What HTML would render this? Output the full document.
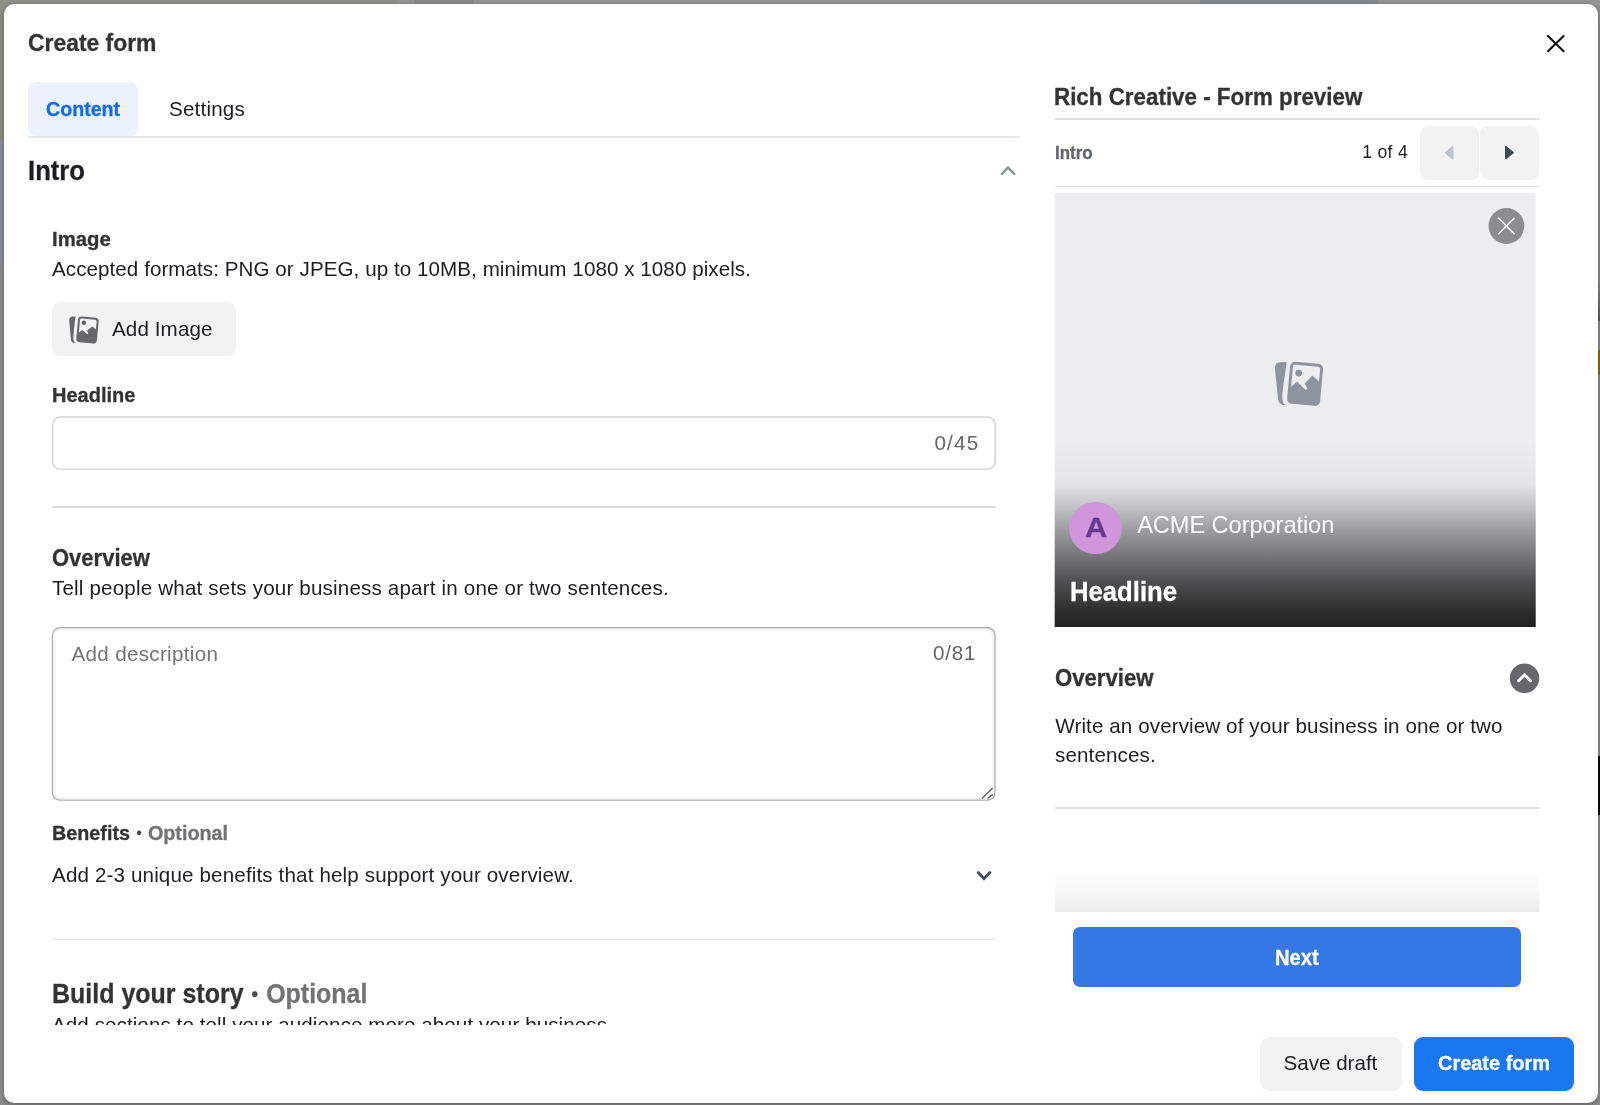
<!DOCTYPE html>
<html lang="en">
<head>
<meta charset="utf-8">
<title>Create form</title>
<style>
*{box-sizing:border-box;margin:0;padding:0}
html,body{width:1600px;height:1105px;overflow:hidden}
body{position:relative;background:#8f8f8f;font-family:"Liberation Sans",sans-serif;color:#1c1e21}
.abs,.t,.bg{position:absolute}
.t{white-space:nowrap;line-height:1;transform-origin:0 0}
.b{font-weight:bold;-webkit-text-stroke:.3px}
.dk{color:#333}
.gr{color:#666}
.opt{color:#717273}
.dot{color:#4a4b4d;font-size:.74em;position:relative;top:-.123em;padding:0 .0615em}
.wh{color:#fff}
.hr{position:absolute;background:#dfdfe1;height:1.5px}
#modal{position:absolute;left:4px;top:4px;width:1593.5px;height:1098.5px;background:#fff;border-radius:10px;box-shadow:0 2px 6px rgba(0,0,0,.35)}
#page{position:absolute;left:0;top:0;width:1600px;height:1105px;will-change:transform}
.btn{position:absolute;border-radius:8px;background:#f2f2f2}
.field{position:absolute;background:#fff;border-radius:8px}
svg{position:absolute;overflow:visible}
</style>
</head>
<body>
<!-- page behind the dialog overlay -->
<div class="bg" style="left:0;top:0;width:397px;height:140px;background:#8e9188"></div>
<div class="bg" style="left:0;top:140px;width:6px;height:126px;background:#8d919a"></div>
<div class="bg" style="left:397px;top:0;width:803px;height:6px;background:#959595"></div>
<div class="bg" style="left:415px;top:0;width:58px;height:6px;background:#8b8b8b"></div>
<div class="bg" style="left:1200px;top:0;width:178px;height:6px;background:#848c97"></div>
<div class="bg" style="left:1378px;top:0;width:222px;height:6px;background:#959595"></div>
<div class="bg" style="left:1596px;top:280px;width:4px;height:41px;background:linear-gradient(#8f8f8f,#5e5e5e)"></div>
<div class="bg" style="left:1596px;top:349.8px;width:4px;height:25.2px;background:#996a00"></div>
<div class="bg" style="left:1596px;top:755.8px;width:4px;height:59.7px;background:#060606"></div>

<div id="modal"></div>

<div id="page">
<!-- header -->
<div class="t b dk" style="left:27.7px;top:32px;font-size:23.6px;transform:scaleX(0.9700)">Create form</div>
<svg style="left:1545px;top:33px" width="22" height="22" viewBox="0 0 22 22"><path d="M3 2.9 L18.6 18.2 M18.6 2.9 L3 18.2" stroke="#111" stroke-width="2.1" stroke-linecap="round" fill="none"/></svg>

<!-- tabs -->
<div class="abs" style="left:28px;top:82px;width:110px;height:53.5px;border-radius:8px;background:#ebf2fe"></div>
<div class="t b" style="left:45.8px;top:99px;font-size:20.6px;transform:scaleX(0.9529);color:#0f6bf2">Content</div>
<div class="t" style="left:169.0px;top:99px;font-size:20.6px;letter-spacing:0.198px">Settings</div>
<div class="hr" style="left:28px;top:136px;width:992px;height:2px;background:#e3e5e9"></div>

<!-- left column : Intro section -->
<div class="t b" style="left:27.6px;top:157px;font-size:27.2px;transform:scaleX(0.9440)">Intro</div>
<svg style="left:998px;top:162px" width="20" height="16" viewBox="0 0 20 16"><path d="M3.8 12 L10 5.6 L16.3 12" stroke="#8d949e" stroke-width="2.45" stroke-linecap="round" stroke-linejoin="miter" fill="none"/></svg>

<div class="t b dk" style="left:51.8px;top:229px;font-size:20.6px;transform:scaleX(0.9868)">Image</div>
<div class="t" style="left:52.0px;top:259px;font-size:20.6px;letter-spacing:0.060px">Accepted formats: PNG or JPEG, up to 10MB, minimum 1080 x 1080 pixels.</div>

<div class="btn" style="left:52px;top:302px;width:184.2px;height:54px"></div>
<svg style="left:69.4px;top:315.5px" width="30" height="28" viewBox="0 0 30 28">
  <g fill="#65676b">
    <path d="M0.2 4.2 C0.2 2 1.6 0.5 3.6 0.5 L6.6 0.5 C5.5 8 4.4 18 4.4 22.6 C4.4 24.5 5 26 6.2 27 L4.6 27 C3 26.5 2.1 25 1.9 23.4 Z"/>
    <g transform="translate(18.45 14) rotate(5.3)">
      <rect x="-9.35" y="-11.85" width="18.7" height="23.7" rx="2.6" ry="2.6" fill="none" stroke="#65676b" stroke-width="2"/>
      <circle cx="-4.2" cy="-6.9" r="2.3"/>
      <path d="M-9.3 4 L-5 0.5 L0.2 4.3 L1.3 3.5 L-0.2 0.6 L4.4 -4 L9.3 -0.9 L9.3 9.6 Q9.3 11.8 7.1 11.8 L-7.1 11.8 Q-9.3 11.8 -9.3 9.6 Z"/>
    </g>
  </g>
</svg>
<div class="t" style="left:112.0px;top:319px;font-size:20.6px;letter-spacing:0.107px">Add Image</div>

<div class="t b dk" style="left:51.5px;top:385px;font-size:20.6px;transform:scaleX(0.9718)">Headline</div>
<svg style="left:52px;top:416px" width="944" height="54" viewBox="0 0 944 54"><rect x="0.72" y="0.92" width="942.4" height="52.2" rx="7.6" ry="7.6" fill="#fff" stroke="#d2d3d5" stroke-width="1.45"/></svg>
<div class="t gr" style="left:934.4px;top:433px;font-size:20.6px;letter-spacing:1.224px">0/45</div>

<div class="hr" style="left:52px;top:506px;width:944px"></div>

<div class="t b dk" style="left:51.8px;top:547px;font-size:23.6px;transform:scaleX(0.9330)">Overview</div>
<div class="t" style="left:52.0px;top:578px;font-size:20.6px;letter-spacing:0.171px">Tell people what sets your business apart in one or two sentences.</div>
<svg style="left:51px;top:626px" width="946" height="176" viewBox="0 0 946 176"><rect x="1.5" y="1.7" width="942.4" height="172.4" rx="7.5" ry="7.5" fill="#fff" stroke="#adadaf" stroke-width="1.45"/><rect x="3.3" y="3.5" width="938.8" height="168.8" rx="6" ry="6" fill="none" stroke="#f4f4f4" stroke-width="2.2"/></svg>
<div class="t" style="left:71.5px;top:644px;font-size:20.6px;letter-spacing:0.321px;color:#737475">Add description</div>
<div class="t gr" style="left:933.0px;top:643px;font-size:20.6px;letter-spacing:0.791px">0/81</div>
<svg style="left:980px;top:785.5px" width="14" height="14" viewBox="0 0 14 14"><path d="M2 12.4 L12.6 2.3 M7.5 12.4 L12.6 8.6" stroke="#505050" stroke-width="1.3" fill="none"/></svg>

<div class="t b dk" style="left:51.6px;top:823px;font-size:20.6px;transform:scaleX(0.9599)">Benefits <span class="dot">•</span><span class="opt"> Optional</span></div>
<div class="t" style="left:52.0px;top:865px;font-size:20.6px;letter-spacing:0.140px">Add 2-3 unique benefits that help support your overview.</div>
<svg style="left:974px;top:868px" width="20" height="16" viewBox="0 0 20 16"><path d="M4.2 4.6 L10 10.6 L15.9 4.6" stroke="#4a505c" stroke-width="2.9" stroke-linecap="round" stroke-linejoin="miter" fill="none"/></svg>

<div class="hr" style="left:52px;top:938.7px;width:944px"></div>

<div class="t b dk" style="left:52.1px;top:980px;font-size:27.2px;transform:scaleX(0.9188)">Build your story <span class="dot">•</span><span class="opt"> Optional</span></div>
<div class="abs" style="left:0;top:1010px;width:1020px;height:15px;overflow:hidden"><div class="abs" style="left:0;top:-1010px"><div class="t" style="left:52.0px;top:1015px;font-size:20.6px;letter-spacing:0.074px">Add sections to tell your audience more about your business.</div></div></div>

<!-- right column : preview -->
<div class="t b dk" style="left:1054.2px;top:86px;font-size:23.6px;transform:scaleX(0.9482)">Rich Creative - Form preview</div>
<div class="hr" style="left:1054.6px;top:118.2px;width:484.8px"></div>
<div class="t b" style="left:1054.6px;top:145px;font-size:17.6px;transform:scaleX(0.9624);color:#606770">Intro</div>
<div class="t" style="left:1362.2px;top:144px;font-size:17.6px;letter-spacing:0.293px">1 of 4</div>
<div class="abs" style="left:1419.6px;top:126.2px;width:59.8px;height:54px;border-radius:8px;background:#f2f2f2"></div>
<div class="abs" style="left:1479.6px;top:126.2px;width:59.8px;height:54px;border-radius:8px;background:#f2f2f2"></div>
<svg style="left:1443px;top:144px" width="12" height="17" viewBox="0 0 12 17"><path d="M9.6 2.9 L9.6 14.3 L2.7 8.6 Z" fill="#bec3c9" stroke="#bec3c9" stroke-width="1.8" stroke-linejoin="round"/></svg>
<svg style="left:1503px;top:144px" width="12" height="17" viewBox="0 0 12 17"><path d="M2.9 2.9 L2.9 14.3 L10 8.6 Z" fill="#444950" stroke="#444950" stroke-width="1.8" stroke-linejoin="round"/></svg>
<div class="hr" style="left:1054.6px;top:185.6px;width:484.8px"></div>

<div class="abs" style="left:1054px;top:193px;width:481px;height:433.6px;transform:translateX(.7px);background:linear-gradient(to bottom,rgba(0,0,0,0) 0,rgba(0,0,0,0) 57%,rgba(0,0,0,.034) 67%,rgba(0,0,0,.194) 72.8%,rgba(0,0,0,.36) 78.3%,rgba(0,0,0,.515) 84.1%,rgba(0,0,0,.67) 89.6%,rgba(0,0,0,.785) 95.3%,rgba(0,0,0,.865) 100%),#ecedf1"></div>
<svg style="left:1488px;top:208px" width="36" height="36" viewBox="0 0 36 36"><circle cx="18.4" cy="18" r="17.9" fill="#8c8d8f"/><path d="M10.2 9.8 L26.6 26.2 M26.6 9.8 L10.2 26.2" stroke="#fff" stroke-width="1.5" fill="none"/></svg>
<svg style="left:1260px;top:350px" width="80" height="64" viewBox="0 0 80 64">
  <g fill="#8d949e">
    <path d="M14.9 18.6 C14.9 14.8 16.6 12.4 20 12.3 L26.7 12.1 C25.4 22 22.4 40 22.3 46.4 C22.3 50 23.2 53.2 25 54.9 L22.6 54.9 C20 54.2 18.3 52 18 48.5 Z"/>
    <g transform="translate(45.1 33.8) rotate(5.2)">
      <rect x="-15.1" y="-19.65" width="30.2" height="39.3" rx="3.6" ry="3.6" fill="none" stroke="#8d949e" stroke-width="2.9"/>
      <circle cx="-7.35" cy="-10.1" r="3.35"/>
      <path d="M-14 4.6 L-8.2 -1.3 L1.2 6.1 L2.8 4.5 L-0.5 -0.15 L6.55 -8.9 L14.8 -2.3 L14.8 16 Q14.8 19.4 11.4 19.4 L-11.4 19.4 Q-14.8 19.4 -14.8 16 L-14.8 5.4 Z"/>
    </g>
  </g>
</svg>
<div class="abs" style="left:1069.4px;top:501.5px;width:52.6px;height:52.6px;border-radius:50%;background:#d096dc"></div>
<div class="t b" style="left:1085.6px;top:514px;font-size:28px;color:#6a3a90;transform:scaleX(1.1);transform-origin:50% 50%">A</div>
<div class="t wh" style="left:1137.2px;top:514px;font-size:23.6px;letter-spacing:-0.059px">ACME Corporation</div>
<div class="t b wh" style="left:1069.7px;top:578px;font-size:27.2px;transform:scaleX(0.9448)">Headline</div>

<div class="t b dk" style="left:1054.7px;top:667px;font-size:23.6px;transform:scaleX(0.9377)">Overview</div>
<svg style="left:1509px;top:663px" width="30" height="30" viewBox="0 0 30 30"><circle cx="15.5" cy="15.25" r="14.7" fill="#66686c"/><path d="M9.6 17.7 L15.5 11.8 L21.4 17.7" stroke="#fff" stroke-width="3" stroke-linecap="round" stroke-linejoin="miter" fill="none"/></svg>
<div class="t" style="left:1055.3px;top:716px;font-size:20.6px;letter-spacing:0.099px">Write an overview of your business in one or two</div>
<div class="t" style="left:1055.0px;top:745px;font-size:20.6px;letter-spacing:0.125px">sentences.</div>
<div class="hr" style="left:1054.6px;top:807px;width:484.8px"></div>
<div class="abs" style="left:1054.6px;top:870px;width:484.8px;height:41.5px;background:linear-gradient(to bottom,#fff 0,#f9f9f9 35%,#ececec 100%)"></div>
<div class="abs" style="left:1072.6px;top:927px;width:448.8px;height:59.7px;border-radius:7px;background:#3578e5"></div>
<div class="t b wh" style="left:1274.7px;top:947px;font-size:22.2px;transform:scaleX(0.9098)">Next</div>

<!-- footer -->
<div class="btn" style="left:1260px;top:1036.6px;width:142px;height:54px;border-radius:9px;background:#f2f2f2"></div>
<div class="t" style="left:1283.6px;top:1053px;font-size:20.6px;letter-spacing:-0.016px">Save draft</div>
<div class="btn" style="left:1414.3px;top:1036.6px;width:159.5px;height:54px;border-radius:9px;background:#1a77f2"></div>
<div class="t b wh" style="left:1437.6px;top:1053px;font-size:20.6px;transform:scaleX(0.9690)">Create form</div>
</div>
</body>
</html>
